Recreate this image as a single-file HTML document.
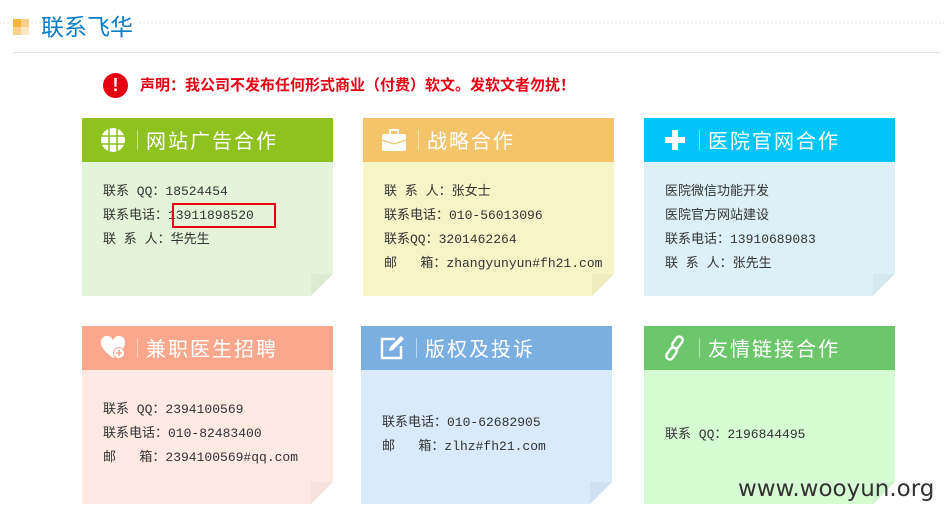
<!DOCTYPE html>
<html><head><meta charset="utf-8"><style>
*{margin:0;padding:0;box-sizing:border-box}
body{width:944px;height:520px;background:#fff;font-family:"Liberation Sans","Noto Sans CJK SC",sans-serif;position:relative;overflow:hidden}
.dots{position:absolute;left:0;top:22px;width:944px;border-top:2px dotted #f2f2f2}
.title{position:absolute;left:41px;top:8px;font-size:23px;color:#0a7bc5;background:#fff;padding-right:4px}
.sq{position:absolute;left:13px;top:19px;width:16px;height:16px}
.sq i{position:absolute;width:8px;height:8px}
.line{position:absolute;left:13px;top:52px;width:927px;height:1px;background:#e2e2e2}
.notice{position:absolute;left:103px;top:73px;height:25px}
.notice .ic{position:absolute;left:0;top:0;width:25px;height:25px;border-radius:50%;background:#e60012;color:#fff;font-weight:bold;text-align:center;font-size:18px;line-height:25px}
.notice span{position:absolute;left:37px;top:1px;white-space:nowrap;color:#e60012;font-weight:bold;font-size:15px}
.card{position:absolute;width:251px;height:178px}
.card .hd{height:44px;position:relative;color:#fff;font-size:20px}
.card .hd .ico{position:absolute;left:18px;top:9px;width:26px;height:26px}
.card .hd .sep{position:absolute;left:55px;top:12px;width:1px;height:20px;background:rgba(255,255,255,.5)}
.card .hd .t{position:absolute;left:64px;top:7px;letter-spacing:2px}
.card .bd{position:absolute;top:44px;left:0;right:0;bottom:0;font-size:13px;color:#333;padding-left:21px;font-family:"Liberation Mono","Noto Sans CJK SC",monospace}
.card .bd p{height:24px;line-height:24px;white-space:nowrap}
.fold2{position:absolute;right:0;bottom:0;width:22px;height:22px;background:linear-gradient(135deg,rgba(0,0,0,.035) 50%,#fff 50%)}
.box{position:absolute;left:90px;top:41px;width:104px;height:25px;border:2px solid #e60012}
</style></head><body>
<div class="dots"></div>
<div class="sq"><i style="left:0;top:0;background:#f5b53f"></i><i style="left:8px;top:0;background:#f9d08a"></i><i style="left:0;top:8px;background:#f9d08a"></i><i style="left:8px;top:8px;background:#fde6c0"></i></div>
<div class="title">联系飞华</div>
<div class="line"></div>
<div class="notice"><div class="ic">!</div><span>声明：我公司不发布任何形式商业（付费）软文。发软文者勿扰！</span></div>

<div class="card" style="left:82px;top:118px;background:#e3f4d8">
<div class="hd" style="background:#8dc21f"><svg class="ico" viewBox="0 0 26 26"><circle cx="13" cy="13" r="12" fill="#fff"/><g stroke="#8dc21f" stroke-width="1.6" fill="none"><path d="M1 9h24M1 17h24M9 1v24M17 1v24"/></g></svg><div class="sep"></div><div class="t">网站广告合作</div></div>
<div class="bd" style="padding-top:18px"><p>联系&nbsp;QQ：18524454</p><p>联系电话：13911898520</p><p>联 系 人：华先生</p><div class="box"></div></div><div class="fold2"></div></div>

<div class="card" style="left:363px;top:118px;background:#f7f4c8">
<div class="hd" style="background:#f4c46b"><svg class="ico" viewBox="0 0 26 26"><rect x="1" y="7" width="24" height="17" rx="2" fill="#fff"/><rect x="9" y="3" width="8" height="5" fill="none" stroke="#fff" stroke-width="2"/><path d="M1 13l12 4 12-4" stroke="#f4c46b" stroke-width="1.2" fill="none"/></svg><div class="sep"></div><div class="t">战略合作</div></div>
<div class="bd" style="padding-top:18px"><p>联 系 人：张女士</p><p>联系电话：010-56013096</p><p>联系QQ：3201462264</p><p>邮&nbsp;&nbsp;&nbsp;箱：zhangyunyun#fh21.com</p></div><div class="fold2"></div></div>

<div class="card" style="left:644px;top:118px;background:#dcf1f7">
<div class="hd" style="background:#00c6f7"><svg class="ico" viewBox="0 0 26 26"><path d="M10 3h6v7h7v6h-7v7h-6v-7H3v-6h7z" fill="#fff"/></svg><div class="sep"></div><div class="t">医院官网合作</div></div>
<div class="bd" style="padding-top:18px"><p>医院微信功能开发</p><p>医院官方网站建设</p><p>联系电话：13910689083</p><p>联 系 人：张先生</p></div><div class="fold2"></div></div>

<div class="card" style="left:82px;top:326px;background:#ffe9e3">
<div class="hd" style="background:#fba78e"><svg class="ico" viewBox="0 0 26 26"><path d="M13 23C4 16 1 12 1 8a6 6 0 0 1 12-2 6 6 0 0 1 12 2c0 4-3 8-12 15z" fill="#fff"/><circle cx="19" cy="18" r="6" fill="#fba78e"/><circle cx="19" cy="18" r="5" fill="#fff"/><path d="M16 18h6M19 15v6" stroke="#fba78e" stroke-width="1.6"/></svg><div class="sep"></div><div class="t">兼职医生招聘</div></div>
<div class="bd" style="padding-top:28px"><p>联系&nbsp;QQ：2394100569</p><p>联系电话：010-82483400</p><p>邮&nbsp;&nbsp;&nbsp;箱：2394100569#qq.com</p></div><div class="fold2"></div></div>

<div class="card" style="left:361px;top:326px;width:251px;background:#d8eafb">
<div class="hd" style="background:#7bafe2"><svg class="ico" viewBox="0 0 26 26"><path d="M16 4H3v19h19V11" stroke="#fff" stroke-width="2.4" fill="none"/><path d="M22 1l3 3-11 11-4 1 1-4z" fill="#fff"/></svg><div class="sep"></div><div class="t">版权及投诉</div></div>
<div class="bd" style="padding-top:41px"><p>联系电话：010-62682905</p><p>邮&nbsp;&nbsp;&nbsp;箱：zlhz#fh21.com</p></div><div class="fold2"></div></div>

<div class="card" style="left:644px;top:326px;background:#d6fcd4">
<div class="hd" style="background:#6cc66c"><svg class="ico" viewBox="0 0 26 26"><g fill="none" stroke="#fff" stroke-width="2.4"><rect x="12" y="1" width="7" height="13" rx="3.5" transform="rotate(35 15.5 7.5)"/><rect x="6" y="12" width="7" height="13" rx="3.5" transform="rotate(35 9.5 18.5)"/></g></svg><div class="sep"></div><div class="t">友情链接合作</div></div>
<div class="bd" style="padding-top:53px"><p>联系&nbsp;QQ：2196844495</p></div><div class="fold2"></div></div>

<div style="position:absolute;left:738px;top:476px;font-size:23px;color:#333;font-family:'DejaVu Sans','Liberation Sans',sans-serif;letter-spacing:0">www.wooyun.org</div>
</body></html>
